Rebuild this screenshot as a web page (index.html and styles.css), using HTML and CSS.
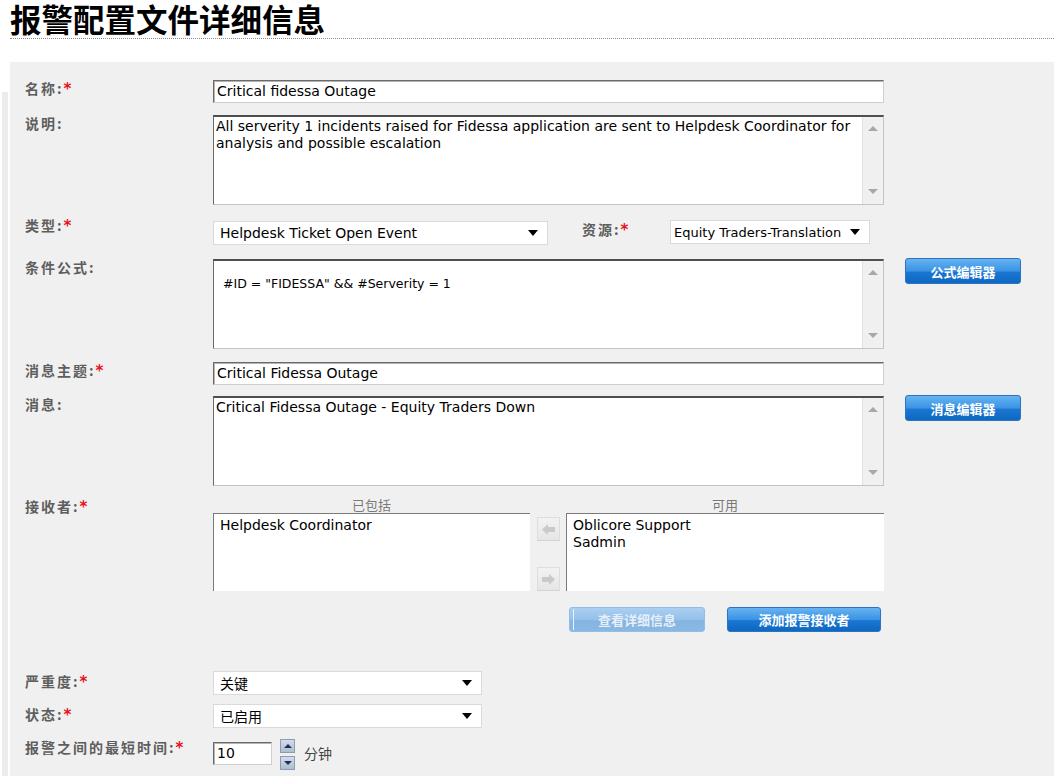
FILE: index.html
```html
<!DOCTYPE html>
<html lang="zh-CN">
<head>
    <meta charset="UTF-8">
    <title>报警配置文件详细信息</title>
    <link rel="stylesheet" href="styles.css">
</head>
<body>
<h1 class="page-title">报警配置文件详细信息</h1>

<div class="page-body">
    <div class="side-strip"></div>
    <div class="panel">

        <!-- 名称 -->
        <div class="row row-name">
            <div class="label">名称:<span class="req">*</span></div>
            <div class="input wide">Critical fidessa Outage</div>
        </div>

        <!-- 说明 -->
        <div class="row row-desc">
            <div class="label">说明:</div>
            <div class="area">
                <div class="area-text">All serverity 1 incidents raised for Fidessa application are sent to Helpdesk Coordinator for<br>analysis and possible escalation</div>
                <div class="vscroll"><span class="up"></span><span class="down"></span></div>
            </div>
        </div>

        <!-- 类型 / 资源 -->
        <div class="row row-type">
            <div class="label">类型:<span class="req">*</span></div>
            <div class="select type-select"><span>Helpdesk Ticket Open Event</span><i class="caret"></i></div>
            <div class="label sub-label">资源:<span class="req">*</span></div>
            <div class="select res-select"><span>Equity Traders-Translation</span><i class="caret"></i></div>
        </div>

        <!-- 条件公式 -->
        <div class="row row-cond">
            <div class="label">条件公式:</div>
            <div class="area">
                <div class="area-text cond-text">#ID = "FIDESSA" &amp;&amp; #Serverity = 1</div>
                <div class="vscroll"><span class="up"></span><span class="down"></span></div>
            </div>
            <div class="btn side-btn">公式编辑器</div>
        </div>

        <!-- 消息主题 -->
        <div class="row row-subject">
            <div class="label">消息主题:<span class="req">*</span></div>
            <div class="input wide">Critical Fidessa Outage</div>
        </div>

        <!-- 消息 -->
        <div class="row row-msg">
            <div class="label">消息:</div>
            <div class="area">
                <div class="area-text">Critical Fidessa Outage - Equity Traders Down</div>
                <div class="vscroll"><span class="up"></span><span class="down"></span></div>
            </div>
            <div class="btn side-btn">消息编辑器</div>
        </div>

        <!-- 接收者 -->
        <div class="row row-recv">
            <div class="label">接收者:<span class="req">*</span></div>
            <div class="picker">
                <div class="pick-col">
                    <div class="pick-head">已包括</div>
                    <div class="list list-left">Helpdesk Coordinator</div>
                </div>
                <div class="mover">
                    <div class="move-btn">
                        <svg width="13" height="11" viewBox="0 0 13 11"><path d="M0 5.5 L6 0 L6 3 L13 3 L13 8 L6 8 L6 11 Z" fill="#c9c9c9"/></svg>
                    </div>
                    <div class="move-btn">
                        <svg width="13" height="11" viewBox="0 0 13 11"><path d="M13 5.5 L7 0 L7 3 L0 3 L0 8 L7 8 L7 11 Z" fill="#c9c9c9"/></svg>
                    </div>
                </div>
                <div class="pick-col">
                    <div class="pick-head">可用</div>
                    <div class="list list-right">Oblicore Support<br>Sadmin</div>
                </div>
            </div>
        </div>

        <div class="row row-actions">
            <div class="actions">
                <div class="btn btn-off"><span class="gleam"></span>查看详细信息</div>
                <div class="btn btn-add">添加报警接收者</div>
            </div>
        </div>

        <!-- 严重度 -->
        <div class="row row-sev">
            <div class="label">严重度:<span class="req">*</span></div>
            <div class="select short-select"><span>关键</span><i class="caret"></i></div>
        </div>

        <!-- 状态 -->
        <div class="row row-state">
            <div class="label">状态:<span class="req">*</span></div>
            <div class="select short-select"><span>已启用</span><i class="caret"></i></div>
        </div>

        <!-- 最短时间 -->
        <div class="row row-time">
            <div class="label">报警之间的最短时间:<span class="req">*</span></div>
            <div class="input num">10</div>
            <div class="spinner">
                <div class="spin"><i class="tri-up"></i></div>
                <div class="spin"><i class="tri-down"></i></div>
            </div>
            <div class="unit">分钟</div>
        </div>

    </div>
</div>
</body>
</html>
```

FILE: styles.css
```css
* {
    margin: 0;
    padding: 0;
    box-sizing: border-box;
}
html, body {
    background: #fff;
    overflow: hidden;
}
body {
    width: 1054px;
    height: 776px;
    font-family: "DejaVu Sans", "Noto Sans CJK SC", sans-serif;
    font-size: 14px;
    color: #000;
}

/* 标题 */
.page-title {
    margin-left: 10px;
    height: 39px;
    padding-top: 5px;
    line-height: 33px;
    font-family: "DejaVu Sans", "Noto Sans CJK SC", sans-serif;
    font-size: 31.5px;
    font-weight: 700;
    color: #000;
    white-space: nowrap;
    border-bottom: 1px dotted #8a8a8a;
}

.page-body {
    display: flex;
    margin-top: 23px;
}
.side-strip {
    flex: none;
    width: 6px;
    margin-left: 2px;
    margin-right: 2px;
    margin-top: 30px;
    height: 700px;
    background: #ececec;
}
.panel {
    flex: none;
    width: 1044px;
    height: 720px;
    background: #f0f0f0;
    padding: 18px 0 0 15px;
}

/* 行 */
.row {
    display: flex;
    align-items: flex-start;
}
.label {
    flex: none;
    width: 188px;
    line-height: 16px;
    font-family: "Noto Sans CJK SC", sans-serif;
    font-size: 14px;
    font-weight: 700;
    letter-spacing: 2px;
    color: #5e5e5e;
}
.req {
    color: #e8101c;
    font-family: "DejaVu Sans", sans-serif;
    font-size: 15px;
    letter-spacing: 0;
}

.row-desc { margin-top: 12px; }
.row-type { margin-top: 12px; }
.row-cond { margin-top: 14px; }
.row-subject { margin-top: 13px; }
.row-msg { margin-top: 11px; }
.row-recv { margin-top: 12px; }
.row-actions { margin-top: 16px; }
.row-sev { margin-top: 39px; }
.row-state { margin-top: 9px; }
.row-time { margin-top: 11px; }

.row-sev .label,
.row-state .label { margin-top: 2px; }

/* 输入框 */
.input {
    height: 23px;
    line-height: 20px;
    padding: 0 3px;
    background: #fff;
    border: 1px solid;
    border-color: #6a6a6a #cfcfcf #cfcfcf #6a6a6a;
    box-shadow: inset 1px 1px 0 #b4b4b4;
    white-space: nowrap;
}
.wide { width: 671px; }

/* 文本域 */
.area {
    display: flex;
    width: 671px;
    height: 90px;
    background: #fff;
    border: 1px solid;
    border-color: #4e4e4e #c4c4c4 #c4c4c4 #6a6a6a;
    border-top-width: 2px;
}
.area-text {
    flex: 1;
    padding: 1px 2px;
    line-height: 17px;
    white-space: nowrap;
    overflow: hidden;
}
.cond-text {
    padding: 14px 9px;
    font-size: 12.5px;
}
.vscroll {
    flex: none;
    width: 21px;
    display: flex;
    flex-direction: column;
    justify-content: space-between;
    align-items: center;
    padding: 9px 0 10px;
    background: #f0f0f0;
    border-left: 1px solid #e2e2e2;
}
.vscroll .up {
    border-left: 5px solid transparent;
    border-right: 5px solid transparent;
    border-bottom: 5px solid #a8a8a8;
}
.vscroll .down {
    border-left: 5px solid transparent;
    border-right: 5px solid transparent;
    border-top: 5px solid #a8a8a8;
}

/* 下拉框 */
.select {
    display: flex;
    align-items: center;
    justify-content: space-between;
    height: 24px;
    padding: 0 9px 0 6px;
    background: #fff;
    border: 1px solid #dadada;
    white-space: nowrap;
}
.caret {
    border-left: 5px solid transparent;
    border-right: 5px solid transparent;
    border-top: 6px solid #000;
}
.type-select {
    width: 335px;
    margin-top: 4px;
}
.sub-label {
    width: 88px;
    margin-left: 34px;
    margin-top: 4px;
}
.res-select {
    width: 200px;
    margin-top: 3px;
    font-size: 13px;
    padding-left: 3px;
}
.short-select { width: 269px; }

/* 按钮 */
.btn {
    position: relative;
    display: flex;
    align-items: center;
    justify-content: center;
    height: 26px;
    border: 1px solid #2c74bf;
    border-radius: 3px;
    background: linear-gradient(#66b3f1, #3a93e4 50%, #1b76d2 55%, #0e68c2);
    color: #fff;
    font-family: "Noto Sans CJK SC", sans-serif;
    font-size: 13px;
    font-weight: 700;
}
.side-btn {
    width: 116px;
    margin-left: 21px;
    margin-top: -1px;
}

/* 接收者 */
.picker {
    display: flex;
    align-items: flex-end;
}
.pick-col {
    display: flex;
    flex-direction: column;
}
.pick-head {
    height: 15px;
    line-height: 14px;
    text-align: center;
    font-family: "Noto Sans CJK SC", sans-serif;
    font-size: 13px;
    color: #7a7a7a;
}
.list {
    height: 78px;
    padding: 3px 6px;
    line-height: 17px;
    background: #fff;
    border-top: 1px solid #7a7a7a;
    border-left: 1px solid #7a7a7a;
}
.list-left { width: 317px; }
.list-right { width: 318px; }
.mover {
    display: flex;
    flex-direction: column;
    justify-content: space-between;
    width: 36px;
    height: 78px;
    padding: 4px 0 0 7px;
}
.move-btn {
    display: flex;
    align-items: center;
    justify-content: center;
    width: 23px;
    height: 24px;
    background: linear-gradient(#f2f2f2, #e6e6e6);
    border: 1px solid #dedede;
    border-bottom-color: #d2d2d2;
}

.actions {
    display: flex;
    gap: 22px;
    margin-left: 544px;
}
.btn-off {
    width: 136px;
    height: 25px;
    border-color: #92bde6;
    background: linear-gradient(#aad0f1, #94c0ea 50%, #86b5e2 55%, #8ab8e3);
    color: #e6eef8;
}
.gleam {
    position: absolute;
    left: 3px;
    top: 1px;
    bottom: 1px;
    width: 1px;
    background: #e8f2fc;
}
.btn-add {
    width: 154px;
    height: 25px;
}

/* 最短时间 */
.num {
    width: 59px;
    margin-top: 3px;
    padding-left: 3px;
}
.spinner {
    display: flex;
    flex-direction: column;
    gap: 3px;
    margin-left: 8px;
}
.spin {
    display: flex;
    align-items: center;
    justify-content: center;
    width: 15px;
    height: 14px;
    background: linear-gradient(#d4dde9, #aebdd0);
    border: 1px solid #8e9cb2;
}
.tri-up {
    border-left: 4px solid transparent;
    border-right: 4px solid transparent;
    border-bottom: 4px solid #1c2e5a;
}
.tri-down {
    border-left: 4px solid transparent;
    border-right: 4px solid transparent;
    border-top: 4px solid #1c2e5a;
}
.unit {
    margin-left: 9px;
    margin-top: 5px;
    line-height: 18px;
    font-family: "Noto Sans CJK SC", sans-serif;
    font-size: 14px;
    color: #444;
}
```
